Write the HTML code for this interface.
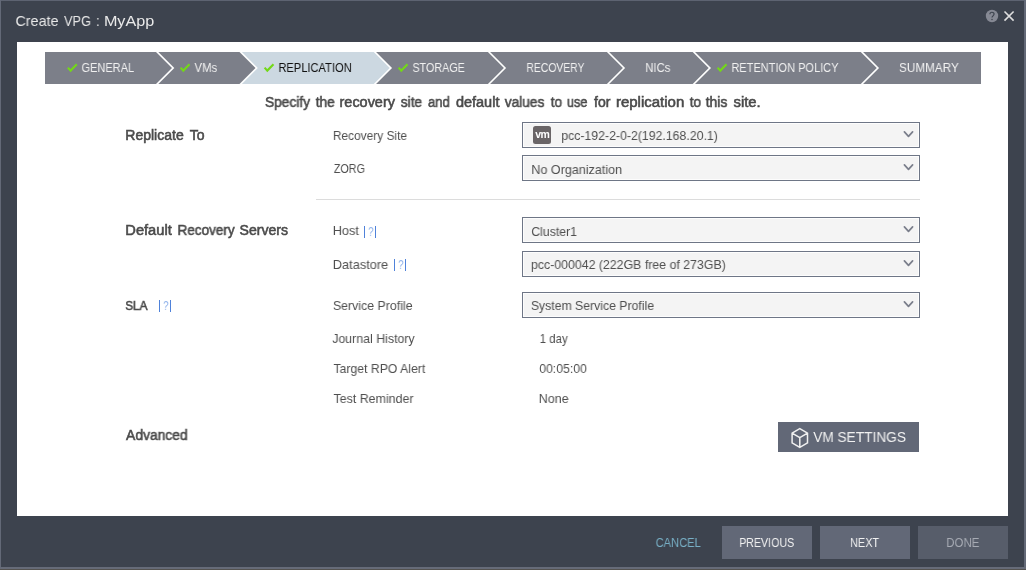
<!DOCTYPE html>
<html lang="en">
<head>
<meta charset="utf-8">
<title>Create VPG : MyApp</title>
<style>

html,body{margin:0;padding:0}
body{width:1026px;height:570px;position:relative;overflow:hidden;background:#3d434e;
 font-family:"Liberation Sans",sans-serif;}
.abs{position:absolute}
.t{position:absolute;white-space:pre;line-height:20px;height:20px;transform-origin:0 0;will-change:transform;}
.panel{position:absolute;left:17px;top:42px;width:991px;height:474px;background:#fff}
.dd{position:absolute;left:522px;width:396px;height:24px;border:1px solid #6e7686;background:#f4f4f4;
 box-shadow:inset 0 0 0 1px #fdfdfd}
.btn{position:absolute;background:#626877}
svg{position:absolute;left:0;top:0;overflow:visible}

</style>
</head>
<body>
<div class="abs" style="left:0;top:0;width:1026px;height:1px;background:#5d6371"></div>
<div class="abs" style="left:0;top:0;width:1px;height:570px;background:#636977"></div>
<div class="abs" style="left:1024px;top:0;width:2px;height:570px;background:#636977"></div>
<div class="abs" style="left:0;top:567px;width:1026px;height:2px;background:#666b78"></div>
<div class="abs" style="left:0;top:569px;width:1026px;height:1px;background:#54524f"></div>
<div class="panel"></div>
<svg width="1026" height="570" viewBox="0 0 1026 570">
<rect x="45" y="52" width="936" height="32" fill="#7c7f89"/>
<polygon points="45,52 863.05,52 879.05,68 863.05,84 45,84" fill="#ffffff"/>
<polygon points="45,52 860.75,52 876.75,68 860.75,84 45,84" fill="#7c7f89"/>
<polygon points="45,52 695.0,52 711.0,68 695.0,84 45,84" fill="#ffffff"/>
<polygon points="45,52 692.7,52 708.7,68 692.7,84 45,84" fill="#7c7f89"/>
<polygon points="45,52 609.15,52 625.15,68 609.15,84 45,84" fill="#ffffff"/>
<polygon points="45,52 606.85,52 622.85,68 606.85,84 45,84" fill="#7c7f89"/>
<polygon points="45,52 490.15000000000003,52 506.15000000000003,68 490.15000000000003,84 45,84" fill="#ffffff"/>
<polygon points="45,52 487.85,52 503.85,68 487.85,84 45,84" fill="#7c7f89"/>
<polygon points="45,52 376.05,52 392.05,68 376.05,84 45,84" fill="#ffffff"/>
<polygon points="45,52 373.75,52 389.75,68 373.75,84 45,84" fill="#ccd8e1"/>
<polygon points="45,52 241.8,52 257.8,68 241.8,84 45,84" fill="#ffffff"/>
<polygon points="45,52 239.5,52 255.5,68 239.5,84 45,84" fill="#7c7f89"/>
<polygon points="45,52 158.3,52 174.3,68 158.3,84 45,84" fill="#ffffff"/>
<polygon points="45,52 156.0,52 172.0,68 156.0,84 45,84" fill="#7c7f89"/>
<path d="M67.9,67.6 L70.6,70.6 L76.8,64.3" fill="none" stroke="#73d818" stroke-width="2.1"/>
<path d="M180.6,67.6 L183.29999999999998,70.6 L189.5,64.3" fill="none" stroke="#73d818" stroke-width="2.1"/>
<path d="M264.59999999999997,67.6 L267.3,70.6 L273.5,64.3" fill="none" stroke="#73d818" stroke-width="2.1"/>
<path d="M398.59999999999997,67.6 L401.3,70.6 L407.5,64.3" fill="none" stroke="#73d818" stroke-width="2.1"/>
<path d="M717.6,67.6 L720.3000000000001,70.6 L726.5,64.3" fill="none" stroke="#73d818" stroke-width="2.1"/>
<circle cx="992" cy="16" r="6.2" fill="#868994"/>
<path d="M989.9,14.2 C989.9,11.6 994.1,11.6 994.1,14.1 C994.1,15.8 992,15.9 992,17.6" fill="none" stroke="#3d434e" stroke-width="1.15"/>
<circle cx="992" cy="19.5" r="0.75" fill="#3d434e"/>
<path d="M1004.5,11.5 L1013.6,20.6 M1013.6,11.5 L1004.5,20.6" fill="none" stroke="#dedede" stroke-width="1.6"/>
</svg>
<div class="abs" style="left:316px;top:199px;width:604px;height:1px;background:#dcdcdc"></div>
<div class="dd" style="top:122px"></div>
<div class="dd" style="top:155px"></div>
<div class="dd" style="top:217px"></div>
<div class="dd" style="top:251px"></div>
<div class="dd" style="top:292px"></div>
<svg width="1026" height="570" viewBox="0 0 1026 570">
<path d="M904.4,131.9 L908.5,136.3 L912.6,131.9" fill="none" stroke="#7a7e8b" stroke-width="1.7" stroke-linecap="round" stroke-linejoin="round"/>
<path d="M904.4,164.9 L908.5,169.3 L912.6,164.9" fill="none" stroke="#7a7e8b" stroke-width="1.7" stroke-linecap="round" stroke-linejoin="round"/>
<path d="M904.4,226.9 L908.5,231.3 L912.6,226.9" fill="none" stroke="#7a7e8b" stroke-width="1.7" stroke-linecap="round" stroke-linejoin="round"/>
<path d="M904.4,260.9 L908.5,265.3 L912.6,260.9" fill="none" stroke="#7a7e8b" stroke-width="1.7" stroke-linecap="round" stroke-linejoin="round"/>
<path d="M904.4,301.9 L908.5,306.3 L912.6,301.9" fill="none" stroke="#7a7e8b" stroke-width="1.7" stroke-linecap="round" stroke-linejoin="round"/>
</svg>
<div class="abs" style="left:533px;top:126px;width:18px;height:18px;border-radius:2.5px;background:#6a6567"></div>
<span class="t" style="left:535px;padding-left:0.3px;top:124px;font-size:10.5px;font-weight:700;color:#fff;letter-spacing:-0.6px;transform:scaleX(0.98)">vm</span>
<div class="btn" style="left:778px;top:422px;width:141px;height:30px"></div>
<div class="btn" style="left:722px;top:526px;width:90px;height:33px"></div>
<div class="btn" style="left:820px;top:526px;width:90px;height:33px"></div>
<div class="btn" style="left:918px;top:526px;width:90px;height:33px;background:#575d6a"></div>
<svg width="1026" height="570" viewBox="0 0 1026 570"><path d="M799.8,428.6 L807.5,433.1 L807.5,442.9 L799.8,447.4 L792.1,442.9 L792.1,433.1 Z M792.1,433.1 L799.8,437.7 L807.5,433.1 M799.8,437.7 L799.8,447.4" fill="none" stroke="#f0f0f0" stroke-width="1.5" stroke-linejoin="round"/></svg>
<div class="abs" style="left:159px;top:300px;width:1.2px;height:12px;background:#4f82da"></div>
<div class="abs" style="left:170px;top:300px;width:1.2px;height:12px;background:#4f82da"></div>
<span class="t" style="left:163px;padding-left:0.3px;top:296px;font-size:12px;color:#8db0ea;transform:scaleX(0.8)">?</span>
<div class="abs" style="left:364px;top:226px;width:1.2px;height:12px;background:#4f82da"></div>
<div class="abs" style="left:375px;top:226px;width:1.2px;height:12px;background:#4f82da"></div>
<span class="t" style="left:368px;padding-left:0.3px;top:222px;font-size:12px;color:#8db0ea;transform:scaleX(0.8)">?</span>
<div class="abs" style="left:394px;top:259px;width:1.2px;height:12px;background:#4f82da"></div>
<div class="abs" style="left:405px;top:259px;width:1.2px;height:12px;background:#4f82da"></div>
<span class="t" style="left:398px;padding-left:0.3px;top:255px;font-size:12px;color:#8db0ea;transform:scaleX(0.8)">?</span>
<span class="t" style="left:81px;padding-left:0.52px;top:58px;font-size:13px;font-weight:400;color:#f1f1f1;transform:scaleX(0.8487);">GENERAL</span>
<span class="t" style="left:194px;padding-left:0.51px;top:58px;font-size:13px;font-weight:400;color:#f1f1f1;transform:scaleX(0.8736);">VMs</span>
<span class="t" style="left:278px;padding-left:0.41px;top:58px;font-size:13px;font-weight:400;color:#111111;transform:scaleX(0.8555);">REPLICATION</span>
<span class="t" style="left:412px;padding-left:0.42px;top:58px;font-size:13px;font-weight:400;color:#f1f1f1;transform:scaleX(0.8296);">STORAGE</span>
<span class="t" style="left:526px;padding-left:0.48px;top:58px;font-size:13px;font-weight:400;color:#f1f1f1;transform:scaleX(0.7986);">RECOVERY</span>
<span class="t" style="left:645px;padding-left:0.18px;top:58px;font-size:13px;font-weight:400;color:#f1f1f1;transform:scaleX(0.8745);">NICs</span>
<span class="t" style="left:731px;padding-left:0.41px;top:58px;font-size:13px;font-weight:400;color:#f1f1f1;transform:scaleX(0.8472);">RETENTION POLICY</span>
<span class="t" style="left:899px;padding-left:0.12px;top:58px;font-size:13px;font-weight:400;color:#f1f1f1;transform:scaleX(0.9006);">SUMMARY</span>
<span class="t" style="left:125px;padding-left:0.19px;top:296px;font-size:13px;font-weight:400;color:#4a4a4a;transform:scaleX(0.9114);-webkit-text-stroke-width:0.55px;">SLA</span>
<span class="t" style="left:126px;padding-left:0.05px;top:425px;font-size:14px;font-weight:400;color:#4a4a4a;transform:scaleX(0.9891);-webkit-text-stroke-width:0.55px;">Advanced</span>
<span class="t" style="left:332px;padding-left:0.89px;top:126px;font-size:13px;font-weight:400;color:#4f4f4f;transform:scaleX(0.9178);">Recovery Site</span>
<span class="t" style="left:333px;padding-left:1.03px;top:159px;font-size:13px;font-weight:400;color:#4f4f4f;transform:scaleX(0.8266);">ZORG</span>
<span class="t" style="left:332px;padding-left:0.70px;top:221px;font-size:13px;font-weight:400;color:#4f4f4f;transform:scaleX(0.9810);">Host</span>
<span class="t" style="left:332px;padding-left:0.70px;top:255px;font-size:13px;font-weight:400;color:#4f4f4f;transform:scaleX(0.9858);">Datastore</span>
<span class="t" style="left:332px;padding-left:0.88px;top:296px;font-size:13px;font-weight:400;color:#4f4f4f;transform:scaleX(0.9520);">Service Profile</span>
<span class="t" style="left:332px;padding-left:0.15px;top:329px;font-size:13px;font-weight:400;color:#4f4f4f;transform:scaleX(0.9518);">Journal History</span>
<span class="t" style="left:333px;padding-left:0.53px;top:359px;font-size:13px;font-weight:400;color:#4f4f4f;transform:scaleX(0.9413);">Target RPO Alert</span>
<span class="t" style="left:333px;padding-left:0.52px;top:389px;font-size:13px;font-weight:400;color:#4f4f4f;transform:scaleX(0.9555);">Test Reminder</span>
<span class="t" style="left:561px;padding-left:0.32px;top:126px;font-size:13px;font-weight:400;color:#4f4f4f;transform:scaleX(0.9457);">pcc-192-2-0-2(192.168.20.1)</span>
<span class="t" style="left:531px;padding-left:0.31px;top:160px;font-size:13px;font-weight:400;color:#4f4f4f;transform:scaleX(0.9665);">No Organization</span>
<span class="t" style="left:531px;padding-left:0.20px;top:222px;font-size:13px;font-weight:400;color:#4f4f4f;transform:scaleX(0.9478);">Cluster1</span>
<span class="t" style="left:530px;padding-left:0.93px;top:255px;font-size:13px;font-weight:400;color:#4f4f4f;transform:scaleX(0.9497);">pcc-000042 (222GB free of 273GB)</span>
<span class="t" style="left:530px;padding-left:0.90px;top:296px;font-size:13px;font-weight:400;color:#4f4f4f;transform:scaleX(0.9423);">System Service Profile</span>
<span class="t" style="left:539px;padding-left:0.66px;top:329px;font-size:13px;font-weight:400;color:#4f4f4f;transform:scaleX(0.8844);">1 day</span>
<span class="t" style="left:539px;padding-left:0.17px;top:359px;font-size:13px;font-weight:400;color:#4f4f4f;transform:scaleX(0.9437);">00:05:00</span>
<span class="t" style="left:538px;padding-left:0.79px;top:389px;font-size:13px;font-weight:400;color:#4f4f4f;transform:scaleX(0.9572);">None</span>
<span class="t" style="left:813px;padding-left:0.14px;top:427px;font-size:14px;font-weight:400;color:#f1f1f1;transform:scaleX(0.9783);">VM SETTINGS</span>
<span class="t" style="left:655px;padding-left:0.71px;top:533px;font-size:13px;font-weight:400;color:#78b0c6;transform:scaleX(0.8565);">CANCEL</span>
<span class="t" style="left:739px;padding-left:0.13px;top:533px;font-size:13px;font-weight:400;color:#f1f1f1;transform:scaleX(0.8196);">PREVIOUS</span>
<span class="t" style="left:850px;padding-left:0.08px;top:533px;font-size:13px;font-weight:400;color:#f1f1f1;transform:scaleX(0.8362);">NEXT</span>
<span class="t" style="left:946px;padding-left:0.18px;top:533px;font-size:13px;font-weight:400;color:#a7abb4;transform:scaleX(0.8851);">DONE</span>
<span class="t" style="left:15px;padding-left:0.52px;top:11px;font-size:15px;font-weight:400;color:#e9e9e9;transform:scaleX(0.9555);">Create</span>
<span class="t" style="left:64px;padding-left:0.06px;top:11px;font-size:15px;font-weight:400;color:#e9e9e9;transform:scaleX(0.8506);">VPG</span>
<span class="t" style="left:96px;padding-left:0.06px;top:11px;font-size:15px;font-weight:400;color:#e9e9e9;transform:scaleX(0.8556);">:</span>
<span class="t" style="left:103px;padding-left:0.85px;top:11px;font-size:15px;font-weight:400;color:#e9e9e9;transform:scaleX(1.0770);">MyApp</span>
<span class="t" style="left:264px;padding-left:0.97px;top:92px;font-size:14px;font-weight:400;color:#4a4a4a;transform:scaleX(0.9803);-webkit-text-stroke-width:0.55px;">Specify</span>
<span class="t" style="left:315px;padding-left:0.66px;top:92px;font-size:14px;font-weight:400;color:#4a4a4a;transform:scaleX(0.9823);-webkit-text-stroke-width:0.55px;">the</span>
<span class="t" style="left:339px;padding-left:0.54px;top:92px;font-size:14px;font-weight:400;color:#4a4a4a;transform:scaleX(1.0314);-webkit-text-stroke-width:0.55px;">recovery</span>
<span class="t" style="left:400px;padding-left:0.87px;top:92px;font-size:14px;font-weight:400;color:#4a4a4a;transform:scaleX(0.9763);-webkit-text-stroke-width:0.55px;">site</span>
<span class="t" style="left:428px;padding-left:0.05px;top:92px;font-size:14px;font-weight:400;color:#4a4a4a;transform:scaleX(0.9319);-webkit-text-stroke-width:0.55px;">and</span>
<span class="t" style="left:455px;padding-left:0.89px;top:92px;font-size:14px;font-weight:400;color:#4a4a4a;transform:scaleX(1.0356);-webkit-text-stroke-width:0.55px;">default</span>
<span class="t" style="left:504px;padding-left:0.66px;top:92px;font-size:14px;font-weight:400;color:#4a4a4a;transform:scaleX(0.9799);-webkit-text-stroke-width:0.55px;">values</span>
<span class="t" style="left:550px;padding-left:0.78px;top:92px;font-size:14px;font-weight:400;color:#4a4a4a;transform:scaleX(0.9629);-webkit-text-stroke-width:0.55px;">to</span>
<span class="t" style="left:566px;padding-left:1.01px;top:92px;font-size:14px;font-weight:400;color:#4a4a4a;transform:scaleX(0.9088);-webkit-text-stroke-width:0.55px;">use</span>
<span class="t" style="left:594px;padding-left:0.05px;top:92px;font-size:14px;font-weight:400;color:#4a4a4a;transform:scaleX(1.0011);-webkit-text-stroke-width:0.55px;">for</span>
<span class="t" style="left:615px;padding-left:0.84px;top:92px;font-size:14px;font-weight:400;color:#4a4a4a;transform:scaleX(1.0714);-webkit-text-stroke-width:0.55px;">replication</span>
<span class="t" style="left:689px;padding-left:0.72px;top:92px;font-size:14px;font-weight:400;color:#4a4a4a;transform:scaleX(0.9748);-webkit-text-stroke-width:0.55px;">to</span>
<span class="t" style="left:705px;padding-left:0.66px;top:92px;font-size:14px;font-weight:400;color:#4a4a4a;transform:scaleX(0.9919);-webkit-text-stroke-width:0.55px;">this</span>
<span class="t" style="left:733px;padding-left:0.51px;top:92px;font-size:14px;font-weight:400;color:#4a4a4a;transform:scaleX(1.0565);-webkit-text-stroke-width:0.55px;">site.</span>
<span class="t" style="left:125px;padding-left:0.30px;top:125px;font-size:14px;font-weight:400;color:#4a4a4a;transform:scaleX(1.0002);-webkit-text-stroke-width:0.55px;">Replicate</span>
<span class="t" style="left:189px;padding-left:0.65px;top:125px;font-size:14px;font-weight:400;color:#4a4a4a;transform:scaleX(0.9963);-webkit-text-stroke-width:0.55px;">To</span>
<span class="t" style="left:125px;padding-left:0.29px;top:220px;font-size:14px;font-weight:400;color:#4a4a4a;transform:scaleX(1.0477);-webkit-text-stroke-width:0.55px;">Default</span>
<span class="t" style="left:177px;padding-left:0.52px;top:220px;font-size:14px;font-weight:400;color:#4a4a4a;transform:scaleX(0.9640);-webkit-text-stroke-width:0.55px;">Recovery</span>
<span class="t" style="left:239px;padding-left:0.55px;top:220px;font-size:14px;font-weight:400;color:#4a4a4a;transform:scaleX(1.0062);-webkit-text-stroke-width:0.55px;">Servers</span>
</body>
</html>
